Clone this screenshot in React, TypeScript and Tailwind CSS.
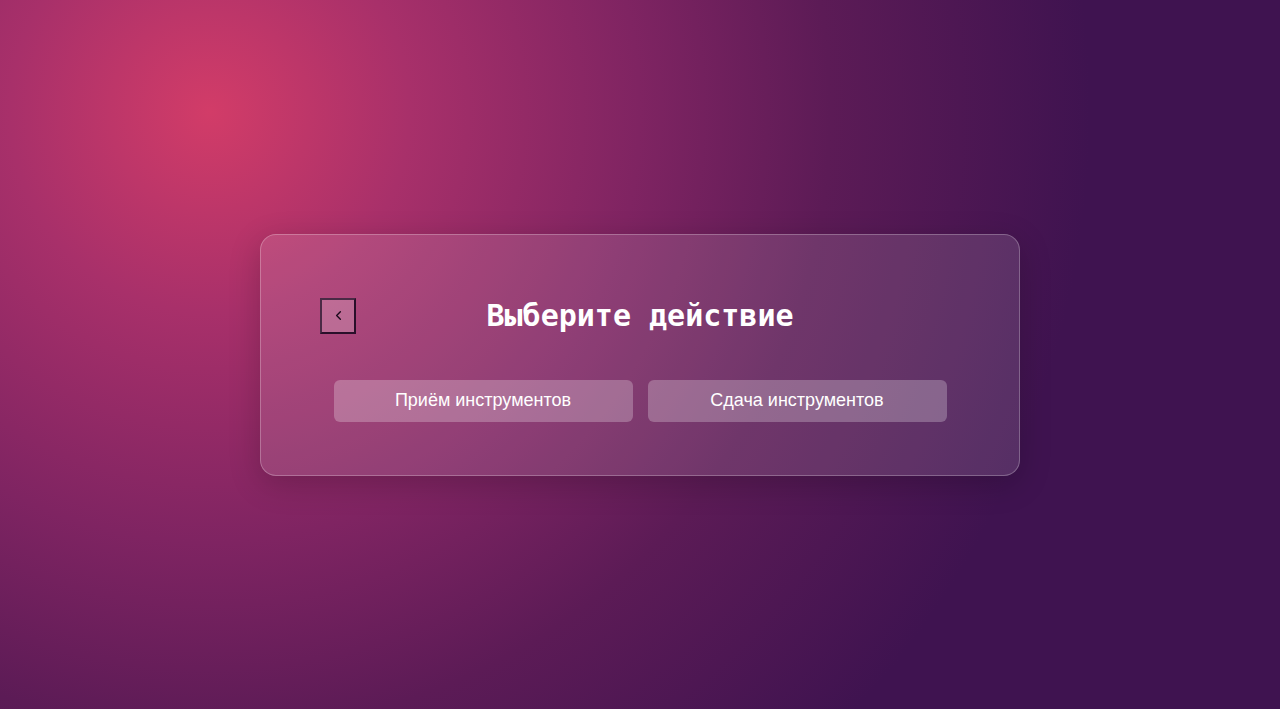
import { ChevronLeft } from 'lucide-react';

export default function App() {
    const handleBack = () => {
        // history.back()
    };

    return (
    <div className="w-full h-[709px] flex items-center justify-center bg-[#3e1250] bg-[radial-gradient(circle_at_210px_112px,#d23c68_0px,#a8306a_200px,#7f2462_430px,#5c1b56_620px,#3f1350_880px)] font-['Liberation_Sans',Arial,sans-serif]">

        {/* Card */}
        <div className="w-[760px] h-[242px] rounded-2xl border border-white/25 bg-white/[0.12] shadow-[0_8px_32px_rgba(0,0,0,0.2)] flex flex-col px-[59px] pt-[63px]">

            {/* Header */}
            <div className="flex items-center h-[36px]">
                <button
                    className="w-[36px] h-[36px] flex items-center justify-center bg-white/20 border-2 border-[#2a0f2a] border-t-[#4a2a45] border-l-[#4a2a45] text-[#1c0a1c] cursor-pointer"
                    onClick={() => handleBack()}
                >
                    <ChevronLeft size={15} strokeWidth={2.2} />
                </button>
                <h1 className="flex-1 text-center pr-[36px] text-white text-[30px] font-bold font-['DejaVu_Sans_Mono',monospace] leading-none">
                    Выберите действие
                </h1>
            </div>

            {/* Actions */}
            <div className="flex gap-[15px] justify-center mt-[46px]">
                <button className="w-[299px] h-[42px] rounded-md bg-white/25 text-white text-[18px] cursor-pointer">
                    Приём инструментов
                </button>
                <button className="w-[299px] h-[42px] rounded-md bg-white/25 text-white text-[18px] cursor-pointer">
                    Сдача инструментов
                </button>
            </div>
        </div>
    </div>
    );
}
